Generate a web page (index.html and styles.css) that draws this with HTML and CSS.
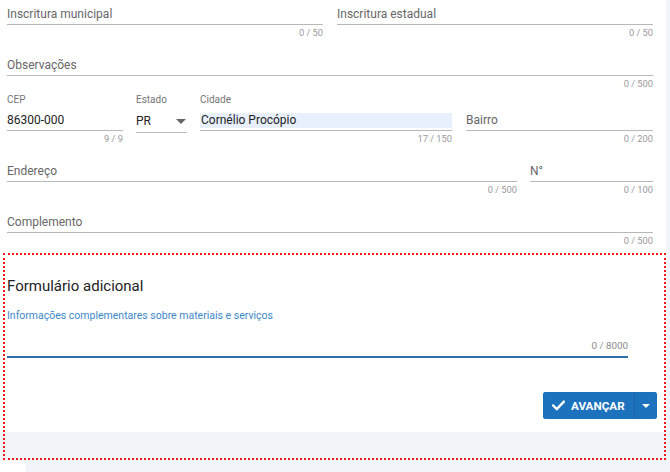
FILE: index.html
```html
<!DOCTYPE html>
<html lang="pt-BR">
<head>
<meta charset="utf-8">
<title>Formulário</title>
<link rel="stylesheet" href="styles.css">
</head>
<body>
<div class="card">
  <div class="form">
    <div class="row">
      <div class="field w-half">
        <div class="input"><span class="ph">Inscritura municipal</span></div>
        <div class="count">0 / 50</div>
      </div>
      <div class="field w-half">
        <div class="input"><span class="ph">Inscritura estadual</span></div>
        <div class="count">0 / 50</div>
      </div>
    </div>
    <div class="row">
      <div class="field w-full">
        <div class="input"><span class="ph">Observações</span></div>
        <div class="count">0 / 500</div>
      </div>
    </div>
    <div class="row row-labeled">
      <div class="field w-cep">
        <div class="label">CEP</div>
        <div class="input"><span class="val">86300-000</span></div>
        <div class="count">9 / 9</div>
      </div>
      <div class="field w-uf">
        <div class="label">Estado</div>
        <div class="input select"><span class="val">PR</span><span class="caret"></span></div>
      </div>
      <div class="field w-cidade">
        <div class="label">Cidade</div>
        <div class="input"><span class="val autofill">Cornélio Procópio</span></div>
        <div class="count">17 / 150</div>
      </div>
      <div class="field w-bairro">
        <div class="label"></div>
        <div class="input"><span class="ph">Bairro</span></div>
        <div class="count">0 / 200</div>
      </div>
    </div>
    <div class="row">
      <div class="field w-end">
        <div class="input"><span class="ph">Endereço</span></div>
        <div class="count">0 / 500</div>
      </div>
      <div class="field w-num">
        <div class="input"><span class="ph">N°</span></div>
        <div class="count">0 / 100</div>
      </div>
    </div>
    <div class="row">
      <div class="field w-full">
        <div class="input"><span class="ph">Complemento</span></div>
        <div class="count">0 / 500</div>
      </div>
    </div>
  </div>

  <section class="extra">
    <h2 class="extra-title">Formulário adicional</h2>
    <div class="extra-label">Informações complementares sobre materiais e serviços</div>
    <div class="textarea"><span class="ta-count">0 / 8000</span></div>
    <div class="actions">
      <div class="btn-group">
        <button class="btn btn-main" type="button">
          <svg class="check" width="13" height="11" viewBox="0 0 13 11"><path d="M1.2 5.6 L4.8 9 L11.8 1.8" fill="none" stroke="#fff" stroke-width="2.4" stroke-linecap="square"/></svg>
          <span>AVANÇAR</span>
        </button>
        <button class="btn btn-drop" type="button"><span class="btn-caret"></span></button>
      </div>
    </div>
  </section>
</div>
<div class="tab"></div>
<div class="highlight"></div>
</body>
</html>
```
FILE: styles.css
```css
* { box-sizing: border-box; }
html, body { margin: 0; padding: 0; }
body {
  background: #f1f5f9;
  font-family: Roboto, "Liberation Sans", Arial, sans-serif;
  width: 670px;
  height: 472px;
  overflow: hidden;
  position: relative;
}
.card {
  width: 666px;
  background: #fff;
  padding-bottom: 13px;
}
.form {
  padding: 4px 13px 0 7px;
  display: flex;
  flex-direction: column;
}
.row {
  display: flex;
  gap: 14px;
  margin-top: 16px;
}
.row:first-child { margin-top: 0; }
.row.row-labeled { margin-top: 3px; gap: 13px; }
.field { display: flex; flex-direction: column; }
.w-half { width: 316px; }
.w-full { width: 646px; }
.w-cep { width: 116px; }
.w-uf { width: 51px; }
.w-cidade { width: 252px; margin-right: 1px; }
.w-bairro { width: 187px; }
.w-end { width: 510px; }
.w-num { width: 123px; margin-left: -1px; }
.label {
  height: 17px;
  font-size: 10px;
  line-height: 14px;
  color: #757575;
}
.input {
  height: 21px;
  border-bottom: 1px solid #b8b8b8;
  display: flex;
  align-items: center;
  font-size: 12px;
}
.ph { color: #676767; }
.val { color: #222; }
.autofill {
  background: #e8f0fe;
  flex: 1;
  height: 15px;
  line-height: 15px;
  padding-left: 1px;
}
.select { justify-content: space-between; height: 23px; }
.caret {
  width: 0; height: 0;
  border-left: 5px solid transparent;
  border-right: 5px solid transparent;
  border-top: 5px solid #666;
  margin-right: 1px;
}
.count {
  height: 14px;
  line-height: 16px;
  font-size: 9.3px;
  text-align: right;
  color: #9a9a9a;
}
.extra { padding: 0 9px 0 7px; }
.extra-title {
  margin: 29px 0 0;
  font-size: 15px;
  line-height: 20px;
  font-weight: 400;
  color: #222;
}
.extra-label {
  margin-top: 13px;
  font-size: 10.5px;
  line-height: 14px;
  color: #3d88c8;
}
.textarea {
  width: 621px;
  height: 35px;
  border-bottom: 2px solid #2c6dab;
  display: flex;
  justify-content: flex-end;
  align-items: flex-end;
}
.ta-count {
  font-size: 9.8px;
  color: #8a8a8a;
  line-height: 14px;
  padding-bottom: 3px;
}
.actions {
  display: flex;
  justify-content: flex-end;
  margin-top: 34px;
}
.btn-group {
  display: flex;
  border-radius: 3px;
  overflow: hidden;
  background: #1d72bd;
}
.btn {
  border: 0;
  background: #1d72bd;
  color: #fff;
  height: 27px;
  font-family: inherit;
  padding: 0;
  display: flex;
  align-items: center;
  cursor: pointer;
}
.btn-main {
  width: 91px;
  padding-left: 9px;
  gap: 6px;
  font-size: 11.7px;
  font-weight: 700;
}
.btn-drop {
  width: 23px;
  border-left: 1px solid #1a64a6;
  justify-content: center;
}
.btn-caret {
  width: 0; height: 0;
  border-left: 4px solid transparent;
  border-right: 4px solid transparent;
  border-top: 4px solid #fff;
}
.tab {
  margin-top: 29px;
  width: 26px;
  height: 11px;
  background: #fff;
  border-top-right-radius: 6px;
}
.highlight {
  position: absolute;
  left: 3px;
  top: 253px;
  width: 663px;
  height: 207px;
  border: 2px dotted #ee1c1c;
  pointer-events: none;
}
```
